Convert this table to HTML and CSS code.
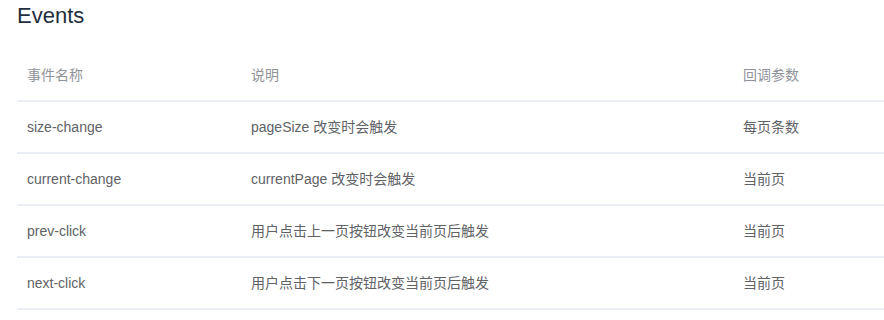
FILE: index.html
```html
<!DOCTYPE html>
<html lang="zh-CN">
<head>
<meta charset="utf-8">
<title>Events</title>
<link rel="stylesheet" href="styles.css">
</head>
<body>
<section class="doc">
  <h3 class="title">Events</h3>
  <table class="events">
    <colgroup>
      <col class="c-name">
      <col class="c-desc">
      <col class="c-param">
    </colgroup>
    <thead>
      <tr><th>事件名称</th><th>说明</th><th>回调参数</th></tr>
    </thead>
    <tbody>
      <tr><td>size-change</td><td>pageSize 改变时会触发</td><td>每页条数</td></tr>
      <tr><td>current-change</td><td>currentPage 改变时会触发</td><td>当前页</td></tr>
      <tr><td>prev-click</td><td>用户点击上一页按钮改变当前页后触发</td><td>当前页</td></tr>
      <tr><td>next-click</td><td>用户点击下一页按钮改变当前页后触发</td><td>当前页</td></tr>
    </tbody>
  </table>
</section>
</body>
</html>
```
FILE: styles.css
```css
html, body {
  margin: 0;
  padding: 0;
  background: #fff;
}
body {
  font-family: "Liberation Sans", "Noto Sans CJK SC", sans-serif;
}
.doc {
  padding: 3px 0 0 17px;
}
.title {
  margin: 0;
  font-size: 22px;
  font-weight: 400;
  line-height: 26px;
  color: #1f2f3d;
}
.events {
  margin-top: 21px;
  width: 867px;
  border-collapse: collapse;
  table-layout: fixed;
  font-size: 14px;
}
.c-name { width: 224px; }
.c-desc { width: 492px; }
.events th,
.events td {
  text-align: left;
  padding: 15px 10px;
  line-height: 20px;
  border-bottom: 2px solid #ebeef5;
  white-space: nowrap;
}
.events th {
  font-weight: 400;
  color: #909399;
}
.events td {
  color: #606266;
}
```
